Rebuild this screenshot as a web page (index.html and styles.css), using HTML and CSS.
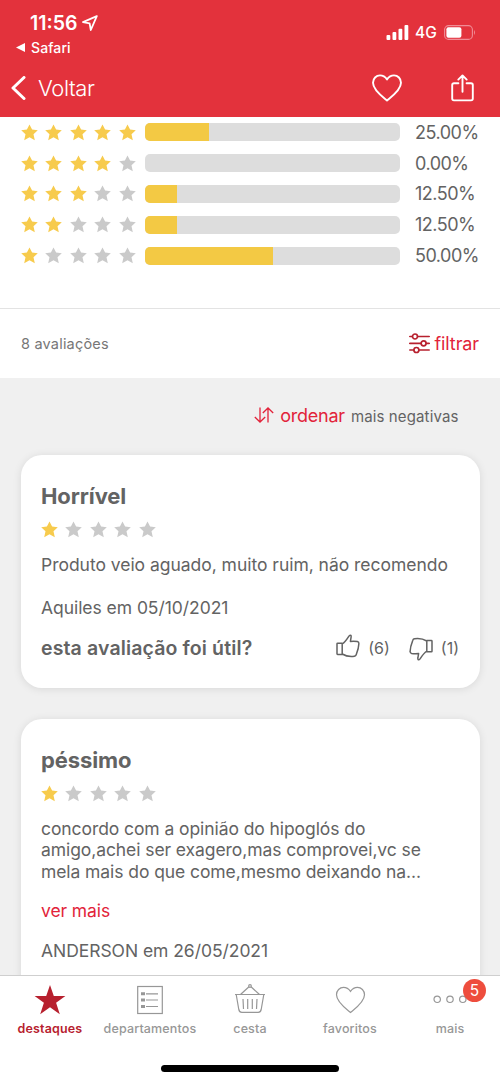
FILE: index.html
```html
<!DOCTYPE html>
<html lang="pt-BR">
<head>
    <meta charset="UTF-8">
    <meta name="viewport" content="width=device-width, initial-scale=1.0">
    <title>Avaliações</title>
    <link rel="stylesheet" href="styles.css">
</head>
<body>
    <!-- Shared shapes -->
    <svg class="sprite" xmlns="http://www.w3.org/2000/svg">
        <symbol id="star" viewBox="0 0 17 17">
            <path d="M8.5 0.4L11.1 5.6L16.8 6.2L12.5 10.2L13.8 16.2L8.5 13.3L3.2 16.2L4.5 10.2L0.2 6.2L5.9 5.6Z" />
        </symbol>
        <symbol id="heart" viewBox="0 0 30 28">
            <path d="M15 26.5C12.5 24.3 1 16.5 1 8.8C1 4.6 4.2 1.4 8 1.4C11 1.4 13.4 3 15 5.4C16.6 3 19 1.4 22 1.4C25.8 1.4 29 4.6 29 8.8C29 16.5 17.5 24.3 15 26.5Z" />
        </symbol>
        <symbol id="thumb" viewBox="0 0 24 24">
            <path d="M1 9.8Q1 9.2 1.6 9.2H6.2V20.4H1.6Q1 20.4 1 19.8ZM6.2 10C8.6 8.4 10.8 5.4 12.6 2.6C13.6 1.2 14.2 0.9 14.8 1.4Q15.4 2 15.1 3.2L14.4 7.4C17 7.2 19.4 7.2 21.4 7.6Q23 8 22.9 9.6C22.8 13.6 21.6 17.2 20.2 20.8Q19.8 22 18.4 22.2C14 22.8 9.6 22 6.2 20" />
        </symbol>
    </svg>

    <header class="header">
        <div class="status-bar">
            <div class="status-left">
                <div class="clock">
                    <span>11:56</span>
                    <svg class="icon-location" viewBox="0 0 16 16"><path d="M14.8 1.2L1 7.2L7.6 8.4L8.8 15Z" /></svg>
                </div>
                <div class="back-app">
                    <svg class="icon-triangle" viewBox="0 0 9 9"><path d="M0 4.5L9 0V9Z" /></svg>
                    <span>Safari</span>
                </div>
            </div>
            <div class="status-right">
                <svg class="icon-signal" viewBox="0 0 23 15">
                    <rect x="0.5" y="10" width="3.8" height="5" rx="1" />
                    <rect x="6.5" y="7" width="3.8" height="8" rx="1" />
                    <rect x="12.5" y="3.7" width="3.8" height="11.3" rx="1" />
                    <rect x="18.5" y="0" width="3.8" height="15" rx="1" />
                </svg>
                <span class="network">4G</span>
                <svg class="icon-battery" viewBox="0 0 32 15">
                    <rect class="battery-case" x="0.6" y="0.6" width="27.8" height="13.8" rx="4" />
                    <rect x="2.4" y="2.3" width="15" height="10.4" rx="2" />
                    <path class="battery-cap" d="M30 5Q32 7.5 30 10Z" />
                </svg>
            </div>
        </div>
        <nav class="nav-bar">
            <a class="nav-back" href="#">
                <svg class="icon-chevron" viewBox="0 0 15 24"><path d="M13 1.5L2 12L13 22.5" /></svg>
                <span>Voltar</span>
            </a>
            <div class="nav-actions">
                <svg class="icon-like"><use href="#heart" /></svg>
                <svg class="icon-share" viewBox="0 0 23 28">
                    <path d="M7.4 9.2H3Q1.2 9.2 1.2 11V24.6Q1.2 26.4 3 26.4H20Q21.8 26.4 21.8 24.6V11Q21.8 9.2 20 9.2H15.6M11.5 17.8V2M7.3 5.6L11.5 1.4L15.7 5.6" />
                </svg>
            </div>
        </nav>
    </header>

    <main class="content">
        <section class="ratings">
            <div class="rating-row">
                <div class="stars">
                    <svg class="on"><use href="#star" /></svg><svg class="on"><use href="#star" /></svg><svg class="on"><use href="#star" /></svg><svg class="on"><use href="#star" /></svg><svg class="on"><use href="#star" /></svg>
                </div>
                <div class="bar"><div class="bar-fill" style="width: 25%"></div></div>
                <span class="percent">25.00%</span>
            </div>
            <div class="rating-row">
                <div class="stars">
                    <svg class="on"><use href="#star" /></svg><svg class="on"><use href="#star" /></svg><svg class="on"><use href="#star" /></svg><svg class="on"><use href="#star" /></svg><svg><use href="#star" /></svg>
                </div>
                <div class="bar"><div class="bar-fill" style="width: 0%"></div></div>
                <span class="percent">0.00%</span>
            </div>
            <div class="rating-row">
                <div class="stars">
                    <svg class="on"><use href="#star" /></svg><svg class="on"><use href="#star" /></svg><svg class="on"><use href="#star" /></svg><svg><use href="#star" /></svg><svg><use href="#star" /></svg>
                </div>
                <div class="bar"><div class="bar-fill" style="width: 12.5%"></div></div>
                <span class="percent">12.50%</span>
            </div>
            <div class="rating-row">
                <div class="stars">
                    <svg class="on"><use href="#star" /></svg><svg class="on"><use href="#star" /></svg><svg><use href="#star" /></svg><svg><use href="#star" /></svg><svg><use href="#star" /></svg>
                </div>
                <div class="bar"><div class="bar-fill" style="width: 12.5%"></div></div>
                <span class="percent">12.50%</span>
            </div>
            <div class="rating-row">
                <div class="stars">
                    <svg class="on"><use href="#star" /></svg><svg><use href="#star" /></svg><svg><use href="#star" /></svg><svg><use href="#star" /></svg><svg><use href="#star" /></svg>
                </div>
                <div class="bar"><div class="bar-fill" style="width: 50%"></div></div>
                <span class="percent">50.00%</span>
            </div>
        </section>

        <section class="filter-bar">
            <span class="review-count">8 avaliações</span>
            <a class="filter-link" href="#">
                <svg class="icon-filter" viewBox="0 0 21 21">
                    <path d="M0.8 3.5H3.2M8.8 3.5H20.2M0.8 10.3H11.8M17.4 10.3H20.2M0.8 17H4.6M10.2 17H20.2" />
                    <circle cx="6" cy="3.5" r="2.5" />
                    <circle cx="14.6" cy="10.3" r="2.5" />
                    <circle cx="7.4" cy="17" r="2.5" />
                </svg>
                <span>filtrar</span>
            </a>
        </section>

        <section class="reviews">
            <div class="sort-bar">
                <svg class="icon-sort" viewBox="0 0 20 16"><path d="M6 0.5V15M0.8 10L6 15L11.2 10M14 15.5V1M8.8 6L14 1L19.2 6" /></svg>
                <a class="sort-link" href="#">ordenar</a>
                <span class="sort-value">mais negativas</span>
            </div>

            <article class="card">
                <h2 class="card-title">Horrível</h2>
                <div class="stars">
                    <svg class="on"><use href="#star" /></svg><svg><use href="#star" /></svg><svg><use href="#star" /></svg><svg><use href="#star" /></svg><svg><use href="#star" /></svg>
                </div>
                <p class="card-text">Produto veio aguado, muito ruim, não recomendo</p>
                <p class="card-author">Aquiles em 05/10/2021</p>
                <div class="card-footer">
                    <span class="helpful">esta avaliação foi útil?</span>
                    <div class="votes">
                        <svg class="icon-thumb"><use href="#thumb" /></svg>
                        <span class="vote-count">(6)</span>
                        <svg class="icon-thumb down"><use href="#thumb" /></svg>
                        <span class="vote-count">(1)</span>
                    </div>
                </div>
            </article>

            <article class="card long">
                <h2 class="card-title">péssimo</h2>
                <div class="stars">
                    <svg class="on"><use href="#star" /></svg><svg><use href="#star" /></svg><svg><use href="#star" /></svg><svg><use href="#star" /></svg><svg><use href="#star" /></svg>
                </div>
                <p class="card-text">concordo com a opinião do hipoglós do<br>amigo,achei ser exagero,mas comprovei,vc se<br>mela mais do que come,mesmo deixando na...</p>
                <a class="more-link" href="#">ver mais</a>
                <p class="card-author">ANDERSON em 26/05/2021</p>
            </article>
        </section>
    </main>

    <footer class="tab-bar">
        <div class="tabs">
            <a class="tab active" href="#">
                <svg class="tab-icon" viewBox="0 0 34 34"><path d="M17 2L20.8 13H32.4L23.1 19.8L26.8 31.2L17 24.2L7.2 31.2L10.9 19.8L1.6 13H13.2Z" /></svg>
                <span>destaques</span>
            </a>
            <a class="tab" href="#">
                <svg class="tab-icon" viewBox="0 0 34 34">
                    <rect x="4.7" y="3.5" width="24.6" height="27" />
                    <path d="M13 10.8H25M13 17H25M13 23.5H25" />
                    <path class="bullets" d="M8 10.8H12M8 17H12M8 23.5H12" />
                </svg>
                <span>departamentos</span>
            </a>
            <a class="tab" href="#">
                <svg class="tab-icon" viewBox="0 0 34 34">
                    <path d="M2 11.5H32M3.2 11.5L5.8 26.5Q6.4 29.3 8.8 29.3H25.2Q27.6 29.3 28.2 26.5L30.8 11.5M7.5 11.5L16 3.8M26.5 11.5L18 3.8M10 16L10.5 26M14.7 16V26M19.3 16V26M24 16L23.5 26" />
                    <circle cx="17" cy="3" r="1.3" />
                </svg>
                <span>cesta</span>
            </a>
            <a class="tab" href="#">
                <svg class="tab-icon heart"><use href="#heart" /></svg>
                <span>favoritos</span>
            </a>
            <a class="tab" href="#">
                <svg class="tab-icon" viewBox="0 0 34 34">
                    <circle cx="4.2" cy="16.3" r="3.2" />
                    <circle cx="17" cy="16.3" r="3.2" />
                    <circle cx="29.8" cy="16.3" r="3.2" />
                </svg>
                <span>mais</span>
                <b class="badge">5</b>
            </a>
        </div>
        <div class="home-indicator"></div>
    </footer>
</body>
</html>
```

FILE: styles.css
```css
:root {
    --red: #e3323c;
    --red-text: #e2233a;
    --red-dark: #b7202e;
    --yellow: #f3c944;
    --star-on: #f7cb4d;
    --star-off: #cacaca;
    --text: #636363;
    --tab-gray: #979797;
    --background: #f0f0f0;
    --bar: #dddddd;
}

* {
    box-sizing: border-box;
}

body {
    margin: 0;
    height: 1082px;
    display: flex;
    flex-direction: column;
    overflow: hidden;
    font-family: Inter, "Liberation Sans", sans-serif;
    color: var(--text);
    background-color: white;
}

a {
    color: inherit;
    text-decoration: none;
}

svg {
    display: block;
    flex: none;
}

h2, p {
    margin: 0;
}

.sprite {
    position: absolute;
    width: 0;
    height: 0;
}

/* Header */
.header {
    flex: none;
    height: 117px;
    background-color: var(--red);
    color: white;
}

.status-bar {
    height: 60px;
    display: flex;
    justify-content: space-between;
    padding: 11px 24px 0 16px;
}

.clock {
    display: flex;
    align-items: center;
    gap: 5px;
    padding-left: 14px;
    height: 24px;
    font-size: 19.5px;
    font-weight: 600;
    letter-spacing: 0;
}

.icon-location {
    width: 16px;
    height: 16px;
    fill: none;
    stroke: white;
    stroke-width: 1.8;
    stroke-linejoin: round;
}

.back-app {
    display: flex;
    align-items: center;
    gap: 6px;
    height: 25px;
    font-size: 14px;
    font-weight: 500;
    letter-spacing: 0.1px;
}

.icon-triangle {
    width: 9px;
    height: 9px;
    fill: white;
}

.status-right {
    display: flex;
    align-items: center;
    height: 20px;
    margin-top: 11px;
}

.icon-signal {
    width: 23px;
    height: 15px;
    fill: white;
}

.network {
    width: 23px;
    margin: 0 6px;
    font-size: 15.5px;
    font-weight: 500;
}

.icon-battery {
    width: 32px;
    height: 15px;
    fill: white;
}

.battery-case {
    fill: none;
    stroke: #f08c96;
    stroke-width: 1.1;
}

.battery-cap {
    fill: #f08c96;
}

.nav-bar {
    height: 57px;
    display: flex;
    align-items: center;
    justify-content: space-between;
    padding: 0 26px 2px 11px;
}

.nav-back {
    display: flex;
    align-items: center;
    gap: 12px;
    font-size: 22px;
    font-weight: 300;
    letter-spacing: -0.4px;
}

.icon-chevron {
    width: 15px;
    height: 24px;
    fill: none;
    stroke: white;
    stroke-width: 3;
    stroke-linecap: round;
    stroke-linejoin: round;
}

.nav-actions {
    display: flex;
    align-items: center;
    gap: 49px;
}

.icon-like {
    width: 30px;
    height: 28px;
    fill: none;
    stroke: white;
    stroke-width: 1.9;
    stroke-linejoin: round;
}

.icon-share {
    width: 23px;
    height: 28px;
    fill: none;
    stroke: white;
    stroke-width: 1.9;
    stroke-linecap: round;
    stroke-linejoin: round;
}

/* Rating summary */
.content {
    flex: 1;
    min-height: 0;
    overflow: hidden;
}

.ratings {
    height: 192px;
    padding: 0 20px 0 21px;
    border-bottom: 1px solid #e3e3e3;
}

.rating-row {
    height: 30.8px;
    display: flex;
    align-items: center;
}

.stars {
    display: flex;
    gap: 7.4px;
    width: 124px;
    flex: none;
}

.stars svg {
    width: 17px;
    height: 17px;
    fill: var(--star-off);
}

.stars .on {
    fill: var(--star-on);
}

.bar {
    width: 255px;
    height: 18px;
    border-radius: 5px;
    background-color: var(--bar);
    overflow: hidden;
}

.bar-fill {
    height: 100%;
    background-color: var(--yellow);
}

.percent {
    margin-left: 15px;
    font-size: 18px;
    letter-spacing: -0.5px;
}

/* Filter */
.filter-bar {
    height: 69px;
    display: flex;
    align-items: center;
    justify-content: space-between;
    padding: 0 21px;
}

.review-count {
    font-size: 14.5px;
    letter-spacing: 0.2px;
    color: #777777;
}

.filter-link {
    display: flex;
    align-items: center;
    gap: 5px;
    font-size: 18px;
    letter-spacing: -0.1px;
    color: var(--red-text);
}

.icon-filter {
    width: 21px;
    height: 21px;
    fill: none;
    stroke: var(--red-dark);
    stroke-width: 1.7;
    stroke-linecap: round;
}

/* Reviews */
.reviews {
    min-height: 600px;
    padding: 0 20.5px;
    background-color: var(--background);
}

.sort-bar {
    height: 77px;
    display: flex;
    align-items: center;
    justify-content: flex-end;
    padding: 0 21px 2px 0;
}

.icon-sort {
    width: 20px;
    height: 16px;
    fill: none;
    stroke: var(--red-text);
    stroke-width: 1.3;
    margin: 0 6px 2px 0;
}

.sort-link {
    font-size: 18px;
    letter-spacing: -0.25px;
    color: var(--red-text);
    margin-right: 6px;
}

.sort-value {
    font-size: 15px;
    letter-spacing: 0.13px;
    padding-top: 2px;
}

.card {
    padding: 28px 20.5px 26px;
    margin-bottom: 31px;
    border-radius: 21px;
    background-color: white;
    box-shadow: 0 1px 8px rgba(0,0,0,0.1);
}

/* Expanded review, runs on under the tab bar */
.card.long {
    min-height: 320px;
}

.card-title {
    font-size: 22px;
    line-height: 26px;
    font-weight: 700;
    letter-spacing: -0.1px;
}

.card .stars {
    margin-top: 12px;
}

.card-text {
    margin-top: 16px;
    font-size: 17.5px;
    line-height: 21.5px;
    letter-spacing: -0.03px;
    white-space: nowrap;
}

.long .card-text {
    letter-spacing: -0.08px;
}

.card-author {
    margin-top: 21px;
    font-size: 17.5px;
    line-height: 22px;
    letter-spacing: -0.05px;
}

.more-link {
    display: block;
    margin-top: 18px;
    font-size: 17.5px;
    line-height: 22px;
    letter-spacing: -0.1px;
    color: var(--red-text);
}

.more-link + .card-author {
    margin-top: 18px;
}

.card-footer {
    display: flex;
    justify-content: space-between;
    align-items: center;
    height: 26px;
    margin-top: 16px;
    margin-bottom: 1px;
}

.helpful {
    font-size: 19.5px;
    font-weight: 600;
    letter-spacing: 0.13px;
}

.votes {
    display: flex;
    align-items: center;
}

.icon-thumb {
    width: 24px;
    height: 24px;
    margin: -4px 8px 0 0;
    fill: none;
    stroke: var(--text);
    stroke-width: 1.5;
    stroke-linejoin: round;
}

.icon-thumb.down {
    transform: rotate(180deg);
    margin: 3px 8px 0 19px;
}

.vote-count {
    font-size: 16px;
}

/* Tab bar */
.tab-bar {
    flex: none;
    height: 107px;
    background-color: white;
    border-top: 1px solid #cfcfcf;
}

.tabs {
    display: grid;
    grid-template-columns: repeat(5, 1fr);
    height: 89px;
}

.tab {
    position: relative;
    display: flex;
    flex-direction: column;
    align-items: center;
    padding-top: 7px;
    font-size: 12.5px;
    font-weight: 500;
    line-height: 20px;
    letter-spacing: 0.15px;
    color: var(--tab-gray);
}

.tab-icon {
    width: 34px;
    height: 34px;
    margin-bottom: 2px;
    fill: none;
    stroke: var(--tab-gray);
    stroke-width: 1.2;
}

.tab-icon.heart {
    width: 31px;
    height: 28px;
    margin: 3px 0 5px;
}

.bullets {
    stroke-width: 3;
}

.tab.active {
    color: var(--red-dark);
    font-weight: 600;
}

.active .tab-icon {
    fill: var(--red-dark);
    stroke: none;
}

.badge {
    position: absolute;
    top: 3px;
    left: 63px;
    width: 23px;
    height: 23px;
    border-radius: 50%;
    background-color: #ee4d3d;
    color: white;
    font-size: 15.5px;
    font-weight: 400;
    line-height: 23px;
    letter-spacing: 0;
    text-align: center;
}

.home-indicator {
    width: 178px;
    height: 7px;
    margin: 0 auto;
    border-radius: 4px;
    background-color: black;
}
```
